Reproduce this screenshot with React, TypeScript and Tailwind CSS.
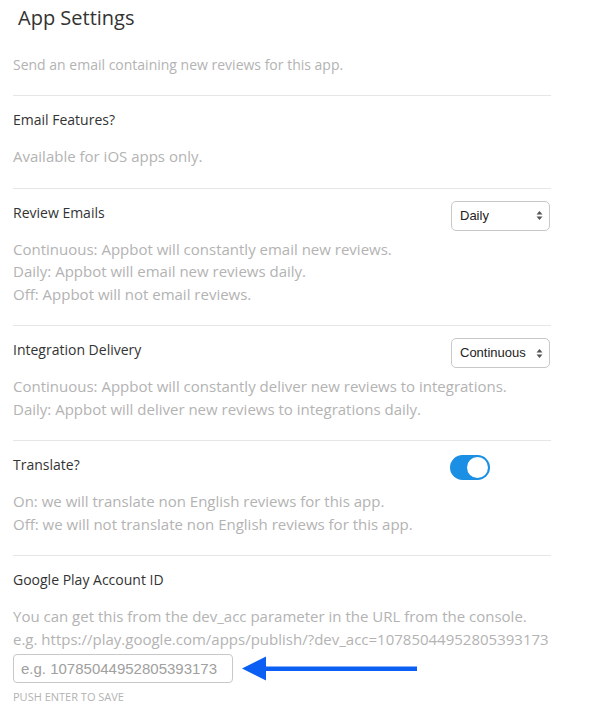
import React from 'react';

const SelectBox: React.FC<{ value: string }> = ({ value }) => (
  <div className="h-[30px] w-[99px] rounded-[5px] border border-[#c8c8c8] bg-white flex items-center justify-between pl-[8px] pr-[6px] font-['Liberation_Sans',Arial,sans-serif] text-[13px] text-[#222]">
    <span>{value}</span>
    <svg width="7" height="11" viewBox="0 0 7 11">
      <path d="M3.5 1 L6.5 4.5 L0.5 4.5 Z" fill="#555" />
      <path d="M3.5 10 L6.5 6.5 L0.5 6.5 Z" fill="#555" />
    </svg>
  </div>
);

const Toggle: React.FC = () => (
  <div className="w-[40px] h-[25px] rounded-full bg-[#1a8fe3] flex items-center justify-end pr-[2px]">
    <div className="w-[21px] h-[21px] rounded-full bg-white" />
  </div>
);

const Section: React.FC<{ label: string; right?: React.ReactNode; children: React.ReactNode }> = ({ label, right, children }) => (
  <div className="border-t border-[#e6e6e6] pt-[12px] pb-[20px]">
    <div className="h-[30px] flex items-start justify-between">
      <p className="text-[14px] leading-[23px] text-[#333]">{label}</p>
      {right && <div className="mr-[1px]">{right}</div>}
    </div>
    <div className="mt-[7px] text-[15px] leading-[22.5px] text-[#b3b3b3] whitespace-nowrap">{children}</div>
  </div>
);

export default function App() {
  return (
    <div className="w-[598px] h-[714px] bg-white overflow-hidden font-['Open_Sans',sans-serif]">
      <div className="ml-[13px] w-[538px]">
        <h1 className="pl-[5px] pt-[3px] text-[20px] leading-[29px] text-[#333]">App Settings</h1>
        <p className="mt-[21px] pb-[19px] text-[14px] leading-[23px] text-[#b3b3b3]">
          Send an email containing new reviews for this app.
        </p>

        <Section label="Email Features?">
          <p>Available for iOS apps only.</p>
        </Section>

        <Section label="Review Emails" right={<SelectBox value="Daily" />}>
          <p>Continuous: Appbot will constantly email new reviews.</p>
          <p>Daily: Appbot will email new reviews daily.</p>
          <p>Off: Appbot will not email reviews.</p>
        </Section>

        <Section label="Integration Delivery" right={<SelectBox value="Continuous" />}>
          <p>Continuous: Appbot will constantly deliver new reviews to integrations.</p>
          <p>Daily: Appbot will deliver new reviews to integrations daily.</p>
        </Section>

        <Section label="Translate?" right={<div className="mt-[2px] mr-[60px]"><Toggle /></div>}>
          <p>On: we will translate non English reviews for this app.</p>
          <p>Off: we will not translate non English reviews for this app.</p>
        </Section>

        <div className="border-t border-[#e6e6e6] pt-[12px]">
          <div className="h-[30px]">
            <p className="text-[14px] leading-[23px] text-[#333]">Google Play Account ID</p>
          </div>
          <div className="mt-[7px] text-[15px] leading-[22.5px] text-[#b3b3b3] whitespace-nowrap">
            <p>You can get this from the dev_acc parameter in the URL from the console.</p>
            <p>e.g. https://play.google.com/apps/publish/?dev_acc=10785044952805393173</p>
          </div>
          <div className="mt-[4px] flex items-center">
            <input
              className="w-[220px] h-[29px] rounded-[4px] border border-[#c8c8c8] px-[7px] font-['Liberation_Sans',Arial,sans-serif] text-[15px] text-[#333] placeholder:text-[#a0a0a0] outline-none"
              placeholder="e.g. 10785044952805393173"
            />
            <svg className="ml-[9px]" width="176" height="26" viewBox="0 0 176 26">
              <path d="M0 12.5 L24 0.5 L24 24.5 Z" fill="#0b5ff2" />
              <rect x="22" y="10.5" width="153" height="4.5" fill="#0b5ff2" />
            </svg>
          </div>
          <p className="mt-[6px] text-[11px] leading-[15px] uppercase text-[#b3b3b3]">Push enter to save</p>
        </div>
      </div>
    </div>
  );
}
